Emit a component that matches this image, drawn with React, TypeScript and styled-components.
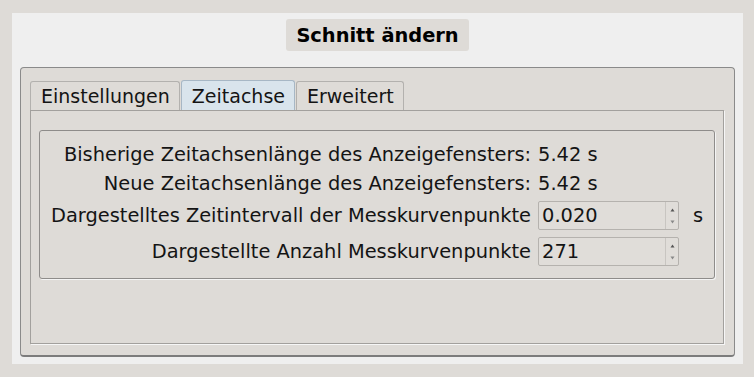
import React from "react"
import styled, { createGlobalStyle } from "styled-components"

const Global = createGlobalStyle`
  html, body {
    margin: 0;
    padding: 0;
    background: #dedbd7;
    font-family: "DejaVu Sans", "Noto Sans", sans-serif;
    color: #141414;
  }
`

const Page = styled.div`
  width: 754px;
  height: 377px;
  box-sizing: border-box;
  padding: 13px 13px 13px 12px;
  display: flex;
`

const Panel = styled.div`
  flex: 1;
  background: #efefef;
  display: flex;
  flex-direction: column;
  align-items: center;
  padding: 6px 8px 7px 8px;
  gap: 16px;
`

const Title = styled.div`
  background: #dedbd7;
  border-radius: 3px;
  height: 32px;
  padding: 0 10px;
  display: flex;
  align-items: center;
  font-weight: bold;
  font-size: 19.4px;
  color: #000;
`

const Frame = styled.div`
  align-self: stretch;
  flex: 1;
  background: #dedbd7;
  border: 1px solid #8a8a8a;
  border-bottom: 2px solid #7c7c7c;
  border-radius: 4px;
  padding: 12px 10px 11px 9px;
  display: flex;
  flex-direction: column;
`

const TabBar = styled.div`
  display: flex;
  align-items: flex-end;
  height: 30px;
  gap: 1px;
`

const Tab = styled.div<{ $active?: boolean }>`
  height: ${p => (p.$active ? 30 : 29)}px;
  box-sizing: border-box;
  padding: 0 9px 0 10px;
  display: flex;
  align-items: center;
  font-size: 19px;
  border: 1px solid ${p => (p.$active ? "#a7b7c5" : "#b3b1ae")};
  border-bottom: none;
  border-radius: 3px 3px 0 0;
  background: ${p => (p.$active ? "#d9e4ec" : "#dedbd7")};
`

const Pane = styled.div`
  flex: 1;
  border: 1px solid #a2a09d;
  box-shadow: 1px 1px 0 #f6f6f6;
  padding: 19px 8px 0 8px;
`

const Group = styled.div`
  border: 1px solid #8e8c8a;
  border-radius: 3px;
  box-shadow: 1px 1px 0 #f4f4f4;
  padding: 12px 11px 12px 11px;
  display: grid;
  grid-template-columns: 1fr 141px auto;
  grid-template-rows: 22px 22px 29px 29px;
  row-gap: 7px;
  column-gap: 7px;
  align-items: center;
  font-size: 19.4px;
`

const Label = styled.div`
  text-align: right;
  white-space: nowrap;
`

const Value = styled.div`
  grid-column: 2 / span 2;
  white-space: nowrap;
`

const Unit = styled.div`
  margin-left: 7px;
  width: 10px;
`

const Spin = styled.div`
  height: 29px;
  box-sizing: border-box;
  border: 1px solid #b5b2ae;
  border-radius: 2px;
  background: #e0ddd9;
  display: flex;
`

const SpinText = styled.div`
  flex: 1;
  display: flex;
  align-items: center;
  padding-left: 3px;
  font-size: 19.4px;
`

const SpinArrows = styled.div`
  width: 12px;
  border-left: 1px solid #c8c5c1;
  display: flex;
  flex-direction: column;
  justify-content: space-between;
  align-items: center;
  padding: 6px 0 5px;
`

function Arrows() {
  return (
    <SpinArrows>
      <svg width="5" height="4" viewBox="0 0 5 4">
        <path d="M2.5 0.5 L4.5 3.5 L0.5 3.5 Z" fill="#555" />
      </svg>
      <svg width="5" height="4" viewBox="0 0 5 4">
        <path d="M0.5 0.5 L4.5 0.5 L2.5 3.5 Z" fill="#888" />
      </svg>
    </SpinArrows>
  )
}

export default function App() {
  return (
    <>
      <Global />
      <Page>
        <Panel>
          <Title>Schnitt ändern</Title>
          <Frame>
            <TabBar>
              <Tab>Einstellungen</Tab>
              <Tab $active>Zeitachse</Tab>
              <Tab>Erweitert</Tab>
            </TabBar>
            <Pane>
              <Group>
                <Label>Bisherige Zeitachsenlänge des Anzeigefensters:</Label>
                <Value>5.42 s</Value>
                <Label>Neue Zeitachsenlänge des Anzeigefensters:</Label>
                <Value>5.42 s</Value>
                <Label>Dargestelltes Zeitintervall der Messkurvenpunkte</Label>
                <Spin>
                  <SpinText>0.020</SpinText>
                  <Arrows />
                </Spin>
                <Unit>s</Unit>
                <Label>Dargestellte Anzahl Messkurvenpunkte</Label>
                <Spin>
                  <SpinText>271</SpinText>
                  <Arrows />
                </Spin>
                <div />
              </Group>
            </Pane>
          </Frame>
        </Panel>
      </Page>
    </>
  )
}
